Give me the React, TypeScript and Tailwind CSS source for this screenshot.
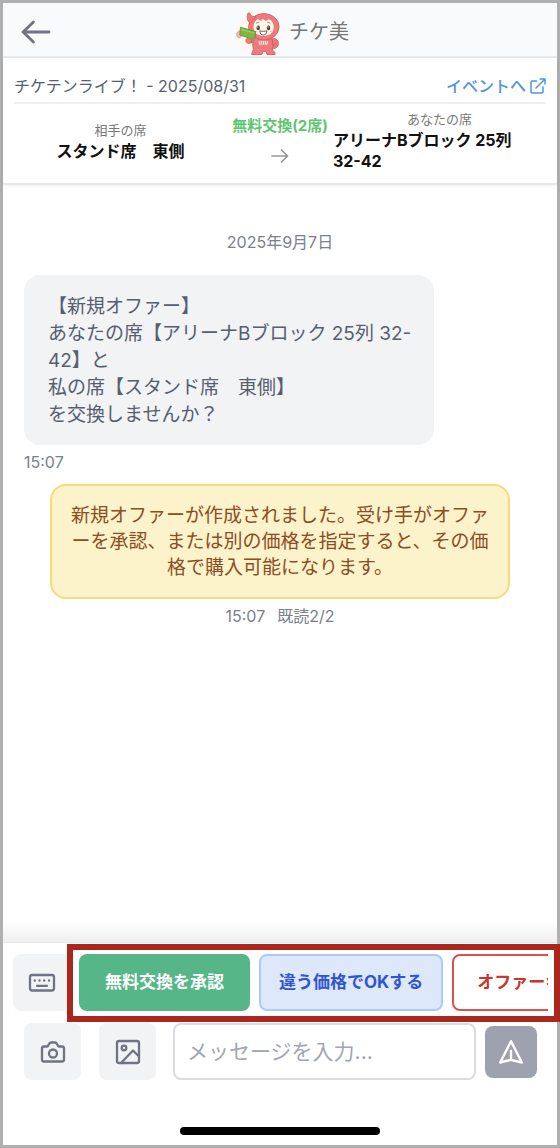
import type { ReactNode } from "react";

function BackIcon() {
  return (
    <svg width="30" height="24" viewBox="0 0 30 24" fill="none" stroke="#6f7385" strokeWidth="2.8" strokeLinecap="round" strokeLinejoin="round" aria-hidden="true">
      <path d="M28 12H2M12.500 2 2 12l10.500 10" />
    </svg>
  );
}

function Mascot() {
  return (
    <svg width="45" height="45" viewBox="0 0 45 45" aria-hidden="true">
      <circle cx="22.500" cy="22.500" r="22" fill="#fff7f1" />
      <g stroke="#c95c61" strokeWidth=".8" strokeLinejoin="round">
        <circle cx="37.500" cy="32.500" r="5" fill="#ea777a" />
        <path d="M19 25c-2.500 4-3 9-1.500 13L15.500 43.500h10.500l1-3h3l1 3h8c.5-2-1-3.500-2.500-4 1-5 .5-10-2-14.500z" fill="#ee7a7d" />
        <ellipse cx="27.800" cy="15.800" rx="15.300" ry="13.300" fill="#ee7a7d" />
        <path d="M11.800 2.500c-1.200 4-.6 7.500 2.500 10L20 5.500c-3 .4-5.600-.4-6-3-.5-1-1.800-1-2.200 0z" fill="#ee7a7d" />
      </g>
      <path d="M14 9.500 19.500 5l-4 1.500-2.500-.8z" fill="#ee7a7d" />
      <path d="M17.500 16.300c0-4 2-7 4.500-8.300l3 2 2-2.300 2.700 2.300L33 8.300c3 1.200 4.700 4 4.700 8 0 5.500-4.500 8.700-10.100 8.700s-10.100-3.200-10.100-8.700z" fill="#fff5e8" />
      <path d="M20.500 12l2.500-.8M31.500 11.200l2.500.8" stroke="#775650" strokeWidth=".7" strokeLinecap="round" />
      <ellipse cx="22.200" cy="16.800" rx="1.700" ry="2.500" fill="#4b3f3c" />
      <ellipse cx="32.500" cy="16.800" rx="1.700" ry="2.500" fill="#4b3f3c" />
      <circle cx="21.800" cy="15.900" r=".6" fill="#fff" />
      <circle cx="32.100" cy="15.900" r=".6" fill="#fff" />
      <ellipse cx="19.800" cy="20.300" rx="1.500" ry=".9" fill="#f9c4ba" />
      <ellipse cx="35.300" cy="20.300" rx="1.500" ry=".9" fill="#f9c4ba" />
      <path d="M23.800 19.800c2 .7 5 .7 7 0-.2 3.100-1.500 4.200-3.500 4.200s-3.300-1.100-3.500-4.200z" fill="#fff" stroke="#5f4945" strokeWidth=".9" />
      <path d="M23 30l.8 3.800M25.300 29.800v4M27.300 29.800v4M29.300 29.800v4M31.500 30l-.8 3.800" stroke="#fff0ea" strokeWidth="1.100" />
      <path d="M.8 22 3.800 19.500l2.700 5-3.500 2.800-2.200-2z" fill="#f4b8b3" stroke="#c98580" strokeWidth=".6" />
      <path d="M4.500 16.300 19.800 20.500l-.8 6.500-2.500.3-.5 4.700-4-.5.3-4.700L3.800 24z" fill="#80b83d" stroke="#5b8f32" strokeWidth=".8" />
      <path d="M5.500 18.500 18.500 22" stroke="#a5d064" strokeWidth="1.200" />
      <path d="M9.800 29.500c0-1.700 1.400-2.700 3-2.500 1.800.2 3 1.500 2.700 3.200-.3 1.500-1.500 2.300-3 2.300s-2.700-1.300-2.700-3z" fill="#ee7a7d" stroke="#c95c61" strokeWidth=".7" />
      <path d="M35.500 33.500c1.500.8 3 .3 3.500-1" fill="none" stroke="#c95c61" strokeWidth=".8" />
    </svg>
  );
}

function ExternalIcon() {
  return (
    <svg width="16" height="16" viewBox="0 0 16 16" fill="none" stroke="#4f94de" strokeWidth="1.500" strokeLinecap="round" strokeLinejoin="round" aria-hidden="true">
      <path d="M6.500 3H2.200C1.500 3 1 3.500 1 4.200v9.600c0 .7.500 1.200 1.200 1.200h9.600c.7 0 1.200-.5 1.200-1.200V9M10 1h5v5M15 1 6 10" />
    </svg>
  );
}

function RightArrowIcon() {
  return (
    <svg width="18" height="16" viewBox="0 0 18 16" fill="none" stroke="#969696" strokeWidth="1.700" strokeLinecap="round" strokeLinejoin="round" aria-hidden="true">
      <path d="M1 8h15.500M10.500 2l6 6-6 6" />
    </svg>
  );
}

function KeyboardIcon() {
  return (
    <svg width="28" height="20" viewBox="0 0 28 20" fill="none" stroke="#6f7484" strokeWidth="2.300" strokeLinecap="round" aria-hidden="true">
      <rect x="2" y="2" width="24" height="15.500" rx="2.200" />
      <path d="M9 12.800h10" />
      <path d="M6.800 7.500h.01M11.500 7.500h.01M16.200 7.500h.01M21 7.500h.01" strokeWidth="2.400" />
    </svg>
  );
}

function CameraIcon() {
  return (
    <svg width="26" height="24" viewBox="0 0 26 24" fill="none" stroke="#6f7484" strokeWidth="2.300" strokeLinejoin="round" aria-hidden="true">
      <path d="M4 6.500h2.500c.8 0 1.300-.4 1.700-1L9 4c.5-1 1.200-1.500 2.200-1.500h3.600c1 0 1.700.5 2.200 1.500l.8 1.500c.4.600.9 1 1.700 1H22c1.200 0 2 .8 2 2v11c0 1.200-.8 2-2 2H4c-1.200 0-2-.8-2-2v-11c0-1.200.8-2 2-2z" />
      <circle cx="13" cy="13.500" r="4" />
    </svg>
  );
}

function PhotoIcon() {
  return (
    <svg width="26" height="26" viewBox="0 0 26 26" fill="none" stroke="#6f7484" strokeWidth="2.300" strokeLinecap="round" strokeLinejoin="round" aria-hidden="true">
      <rect x="2" y="2" width="22" height="22" rx="2" />
      <circle cx="9" cy="9" r="2.300" />
      <path d="M6 24 18 11.500l6 6" />
    </svg>
  );
}

function SendIcon() {
  return (
    <svg width="26" height="26" viewBox="0 0 26 26" fill="none" stroke="#fff" strokeWidth="2.400" strokeLinecap="round" strokeLinejoin="round" aria-hidden="true">
      <path d="M13 2.300 2.200 23.500 13 20.800l10.800 2.700zM13 20.500V12" />
    </svg>
  );
}

function IconButton({ label, children }: { label: string; children: ReactNode }) {
  return (
    <button type="button" aria-label={label} className="flex size-[57px] shrink-0 items-center justify-center rounded-lg bg-[#f2f3f5]">
      {children}
    </button>
  );
}

function Header() {
  return (
    <header className="flex h-[55px] items-center border-b-2 border-[#e8eaed] bg-[#f9fafc] px-4">
      <div className="flex flex-1 pt-1">
        <button type="button" aria-label="戻る" className="p-[2px]">
          <BackIcon />
        </button>
      </div>
      <div className="flex items-center gap-2 pt-[7px]">
        <Mascot />
        <h1 className="pb-[2px] text-[20px] leading-6 text-[#757575]">チケ美</h1>
      </div>
      <div className="w-48" />
    </header>
  );
}

function DealSummary() {
  return (
    <section className="border-b border-[#e5e7ea] px-[11px] pb-[11px] shadow-sm">
      <div className="flex items-end justify-between border-b-2 border-[#eeeff1] pt-4 pb-1 text-[16px] leading-6">
        <p className="text-[#586071]">チケテンライブ！ - 2025/08/31</p>
        <a href="#event" className="flex items-center gap-1 font-medium text-[#4f94de]">
          イベントへ
          <ExternalIcon />
        </a>
      </div>
      <div className="flex items-center gap-[5px] pt-[5px]">
        <div className="flex flex-1 flex-col items-center leading-[21px]">
          <span className="text-[13px] text-[#777]">相手の席</span>
          <strong className="text-[16px] font-bold text-[#111]">スタンド席　東側</strong>
        </div>
        <div className="flex flex-col items-center gap-3 pb-[2px] text-[15px] leading-[21px] font-bold text-[#5ec670]">
          <span>無料交換(2席)</span>
          <RightArrowIcon />
        </div>
        <div className="flex flex-1 flex-col items-center leading-[21px]">
          <span className="text-[13px] text-[#777]">あなたの席</span>
          <strong className="w-full text-[16px] font-bold text-[#111]">
            アリーナBブロック 25列 <span className="whitespace-nowrap">32-42</span>
          </strong>
        </div>
      </div>
    </section>
  );
}

function Conversation() {
  return (
    <main className="flex flex-1 flex-col px-[21px] pt-[46px]">
      <p className="text-center text-[16px] leading-6 text-[#7b808c]">2025年9月7日</p>
      <div className="mt-[21px] w-4/5 rounded-2xl bg-[#f2f3f5] pt-[18px] pr-4 pb-[17px] pl-6 text-[19px] leading-[27px] text-[#565e6d]">
        <p>【新規オファー】</p>
        <p>
          あなたの席【アリーナBブロック 25列 32-
          <br />
          42】と
        </p>
        <p>私の席【スタンド席　東側】</p>
        <p>を交換しませんか？</p>
      </div>
      <p className="mt-[5px] text-[16px] leading-6 text-[#7b808c]">15:07</p>
      <div className="mx-[26px] mt-[10px] rounded-2xl border-2 border-[#f7db79] bg-[#fcf3cb] px-4 pt-[17px] pb-4 text-center text-[19px] leading-[26px] text-[#8c4c24]">
        新規オファーが作成されました。受け手がオファーを承認、または別の価格を指定すると、その価格で購入可能になります。
      </div>
      <p className="mt-[5px] flex justify-center gap-3 text-[16px] leading-6 text-[#7b808c]">
        <span>15:07</span>
        <span>既読2/2</span>
      </p>
    </main>
  );
}

function Composer() {
  return (
    <footer>
      <div className="h-5 bg-linear-to-b from-white to-[#efeff0]" />
      <div className="flex gap-[9px] border-t border-[#e5e7ea] pt-[11px] pr-[9px] pl-[10px]">
        <IconButton label="キーボード">
          <KeyboardIcon />
        </IconButton>
        <div className="relative min-w-0 flex-1">
          <div className="flex gap-[9px] overflow-hidden text-[17px] font-bold whitespace-nowrap">
            <button type="button" className="h-[57px] shrink-0 rounded-lg bg-[#56b687] px-[26px] text-white">
              無料交換を承認
            </button>
            <button type="button" className="h-[57px] shrink-0 rounded-lg border-2 border-[#a9cbfa] bg-[#dde8fb] px-[18px] text-[#3155d0]">
              違う価格でOKする
            </button>
            <button type="button" className="h-[57px] shrink-0 rounded-lg border-2 border-[#d9534c] bg-white px-[23px] text-[#cc352d]">
              オファーキ
            </button>
          </div>
          <div className="pointer-events-none absolute -top-[10px] -right-3 -bottom-[11px] -left-3 border-6 border-[#ab261d]" />
        </div>
      </div>
      <form className="mt-3 flex items-center pr-5 pl-[21px]" onSubmit={(event) => event.preventDefault()}>
        <div className="mr-[17px] flex gap-[18px]">
          <IconButton label="カメラ">
            <CameraIcon />
          </IconButton>
          <IconButton label="写真">
            <PhotoIcon />
          </IconButton>
        </div>
        <input
          type="text"
          aria-label="メッセージ"
          placeholder="メッセージを入力..."
          className="h-[57px] min-w-0 flex-1 rounded-lg border-2 border-[#dadce2] bg-white px-3 text-[21px] text-[#565e6d] placeholder:text-[#a2a6b1]"
        />
        <button type="submit" aria-label="送信" className="ml-[9px] flex size-[52px] shrink-0 items-center justify-center rounded-lg bg-[#9ea2ae]">
          <SendIcon />
        </button>
      </form>
      <div className="mx-auto mt-[47px] mb-[10px] h-2 w-[200px] rounded-full bg-black" />
    </footer>
  );
}

export default function App() {
  return (
    <div className="flex min-h-screen flex-col border-3 border-[#b0b0b0] bg-white font-['Inter','Noto_Sans_CJK_JP',sans-serif]" lang="ja">
      <Header />
      <DealSummary />
      <Conversation />
      <Composer />
    </div>
  );
}
